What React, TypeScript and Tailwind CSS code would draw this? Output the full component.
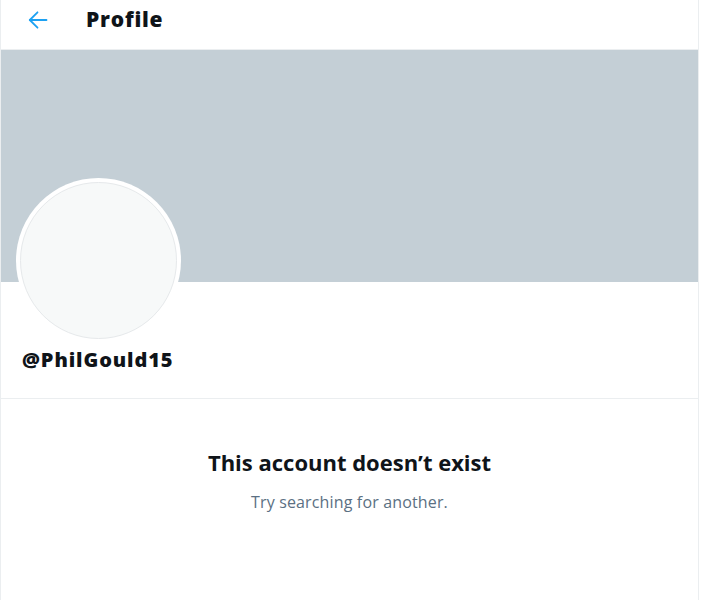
import React from "react";

export default function App() {
  return (
    <div className="w-[712px] h-[600px] bg-white overflow-hidden" style={{ fontFamily: '"Open Sans", "Noto Sans", sans-serif' }}>
      <div className="w-[699px] h-[600px] border-x border-[#ebeef0] flex flex-col">
        <div className="h-[50px] flex items-start pt-[6px] border-b border-[#ebeef0] shrink-0">
          <div className="w-[85px] h-[28px] flex items-center pl-[27px]">
            <svg viewBox="0 0 20 20" className="w-[20px] h-[20px]" fill="none" stroke="#1da1f2" strokeWidth="1.8" strokeLinecap="round" strokeLinejoin="round">
              <path d="M18.5 10H1.8" />
              <path d="M9.5 2.3L1.8 10l7.7 7.7" />
            </svg>
          </div>
          <div className="h-[28px] flex items-center text-[21px] font-extrabold text-[#0f1419] tracking-[0.8px]" style={{ fontWeight: 800 }}>Profile</div>
        </div>
        <div className="h-[232px] bg-[#c4cfd6] shrink-0" />
        <div className="relative px-[15px] h-[117px] border-b border-[#ebeef0] shrink-0">
          <div className="absolute left-[15px] -top-[104px] w-[165px] h-[165px] rounded-full bg-white p-[4px]">
            <div className="w-full h-full rounded-full bg-[#f7f9f9] border border-[#e6e9eb]" />
          </div>
          <div className="absolute left-[21px] top-[64px] text-[20px] font-extrabold text-[#0f1419] leading-[28px] tracking-[0.9px]" style={{ fontWeight: 800 }}>@PhilGould15</div>
        </div>
        <div className="flex flex-col items-center pt-[49px]">
          <div className="text-[22px] font-bold text-[#0f1419] leading-[28px]">This account doesn’t exist</div>
          <div className="mt-[15px] text-[16px] text-[#5b7083] leading-[22px] tracking-[0.15px]">Try searching for another.</div>
        </div>
      </div>
    </div>
  );
}
